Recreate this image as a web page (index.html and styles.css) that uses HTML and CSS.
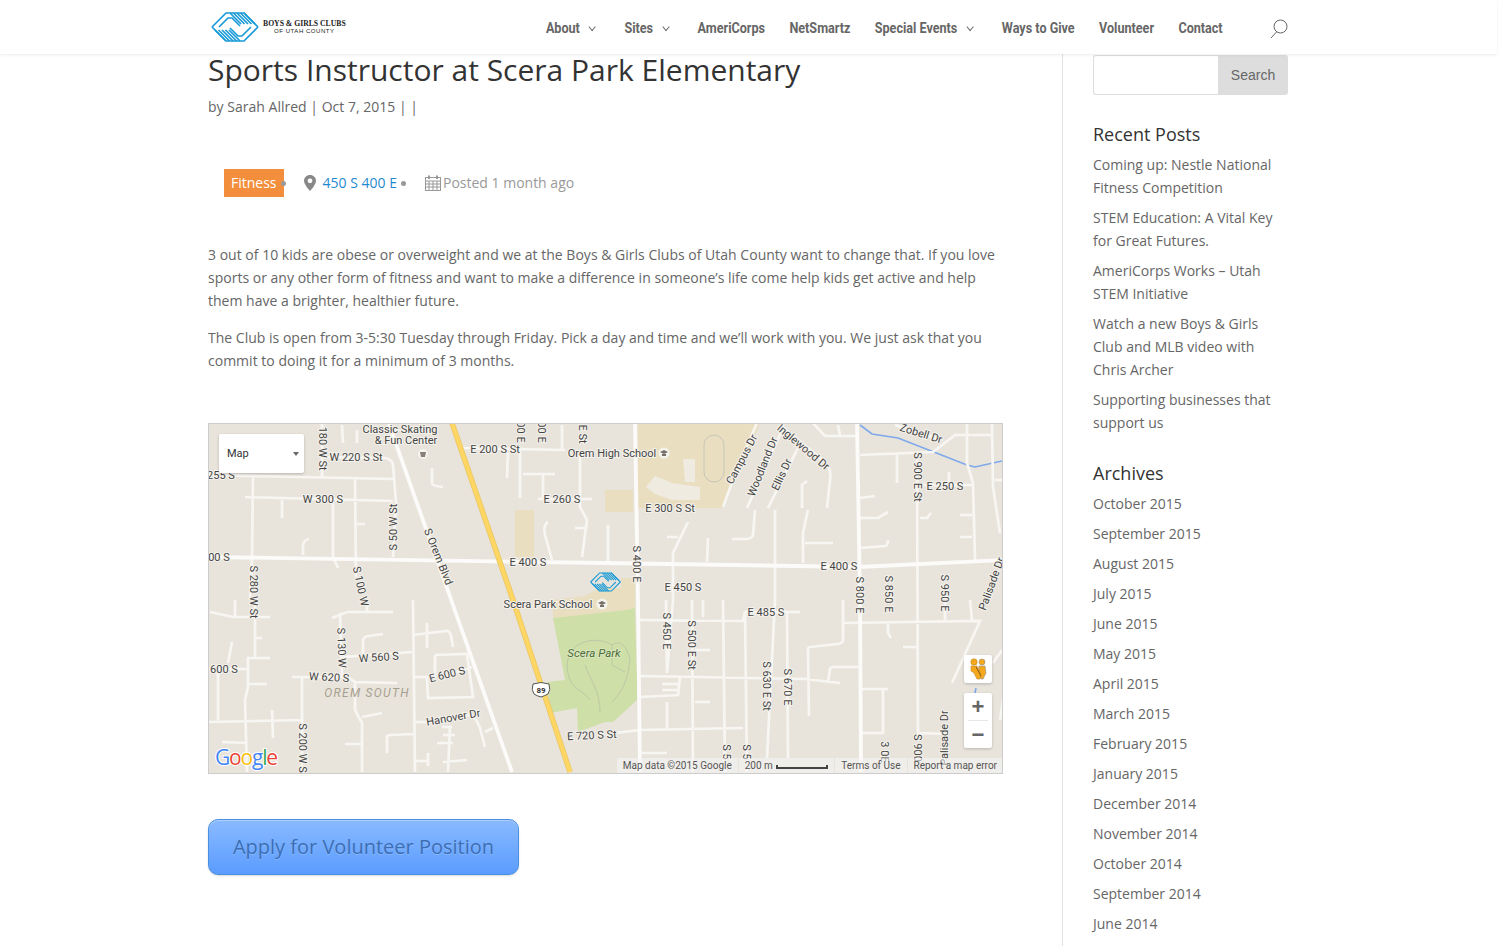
FILE: index.html
```html
<!DOCTYPE html>
<html lang="en">
<head>
    <meta charset="UTF-8">
    <meta name="viewport" content="width=device-width, initial-scale=1.0">
    <title>Sports Instructor at Scera Park Elementary</title>
    <link rel="stylesheet" href="styles.css">
</head>
<body>
    <svg class="defs" width="0" height="0">
        <symbol id="hands" viewBox="0 0 48 30">
            <g id="hand" fill="none" stroke="#1b9bd7" stroke-width="1.7">
                <path d="M1 15 L15 1 H33 L47 15"/>
                <path d="M19 1 L30 12 M22.5 1 L33.5 12 M26 1 L37 12 M29.5 1 L40.5 12 M33 1 L44 12"/>
                <path d="M8 15 L17 6 H21 L29 14"/>
            </g>
            <use href="#hand" transform="rotate(180 24 15)"/>
        </symbol>
    </svg>

    <header class="site-header">
        <div class="header-inner">
            <a class="logo" href="#">
                <svg class="logo-mark" width="48" height="30"><use href="#hands"/></svg>
                <span class="logo-text">
                    <span class="logo-top">Boys &amp; Girls Clubs</span>
                    <span class="logo-bottom">OF UTAH COUNTY</span>
                </span>
            </a>
            <nav class="main-nav">
                <a href="#" class="has-sub">About</a>
                <a href="#" class="has-sub">Sites</a>
                <a href="#">AmeriCorps</a>
                <a href="#">NetSmartz</a>
                <a href="#" class="has-sub">Special Events</a>
                <a href="#">Ways to Give</a>
                <a href="#">Volunteer</a>
                <a href="#">Contact</a>
            </nav>
            <svg class="search-icon" width="18" height="20" viewBox="0 0 18 20" fill="none" stroke="#666" stroke-width="1">
                <circle cx="10.5" cy="7.5" r="6.5"/>
                <path d="M6.5 13 L1 19"/>
            </svg>
        </div>
    </header>

    <div class="page">
        <main class="content">
            <h1>Sports Instructor at Scera Park Elementary</h1>
            <p class="byline">by <a href="#">Sarah Allred</a> | Oct 7, 2015 | <a href="#">|</a></p>

            <div class="job-meta">
                <span class="job-tag">Fitness</span>
                <span class="dot dot-tag"></span>
                <svg class="pin" width="12" height="16" viewBox="0 0 12 16">
                    <path d="M6 0 C2.6 0 0 2.6 0 5.8 C0 10 6 16 6 16 C6 16 12 10 12 5.8 C12 2.6 9.4 0 6 0 Z" fill="#888"/>
                    <circle cx="6" cy="5.8" r="2.4" fill="#fff"/>
                </svg>
                <a class="job-place" href="#">450 S 400 E</a>
                <span class="dot"></span>
                <svg class="cal" width="16" height="16" viewBox="0 0 16 16" fill="none" stroke="#999" stroke-width="1">
                    <rect x="0.5" y="2.5" width="15" height="13"/>
                    <path d="M0.5 6 H15.5 M0.5 9 H15.5 M0.5 12 H15.5 M4 6 V15 M8 6 V15 M12 6 V15"/>
                    <path d="M4 0.5 V4 M12 0.5 V4" stroke-width="2"/>
                </svg>
                <span class="job-date">Posted 1 month ago</span>
            </div>

            <p>3 out of 10 kids are obese or overweight and we at the Boys &amp; Girls Clubs of Utah County want to change that. If you love sports or any other form of fitness and want to make a difference in someone’s life come help kids get active and help them have a brighter, healthier future.</p>
            <p>The Club is open from 3-5:30 Tuesday through Friday. Pick a day and time and we’ll work with you. We just ask that you commit to doing it for a minimum of 3 months.</p>

            <div class="map">
                <svg class="map-canvas" width="794" height="349" viewBox="209 424 794 349">
                    <rect x="209" y="424" width="794" height="349" fill="#e8e4dc"/>
                    <!-- areas -->
                    <path class="school" d="M638 423 H760 L723 508 H638 Z M605 490 H633 V512 H605 Z M515 510 H534 V557 H515 Z M621 578 H635 V611 L553 618 L552 600 L585 596 L600 588 L621 588 Z"/>
                    <path class="park" d="M553 618 L627 610 L635 608 L637 677 V700 L613 722 H605 L578 732 L577 708 L550 713 L547 682 L565 680 Z"/>
                    <path class="park-path" d="M570 680 C562 660 572 645 585 642 C595 638 608 642 612 645 C622 638 628 650 630 660 C628 675 625 690 612 702 M585 665 C590 680 600 690 600 712 M570 680 C575 690 585 692 590 700 M612 645 V665 L625 672"/>
                    <path class="building" d="M646 487 L655 476 L672 483 L700 487 V500 H672 L655 494 Z M683 459 H695 V482 H685 Z"/>
                    <rect class="track" x="704" y="435" width="20" height="47" rx="10"/>
                    <path class="river" d="M860 425 L872 434 L898 438 L967 465 L975 467 L1002 461 M976 688 L974 698"/>
                    <!-- small roads -->
                    <path class="road" d="M208 475 L393 479 M245 497 L393 501 M253 477 L252 557 L250 600 M355 479 L356 577 M333 500 V557 L338 568 M282 500 V518 M322 423 V477 M322 457 L385 458 Q392 459 393 465 L396 503 L393 557 M342 425 L343 443 M357 430 V443 M303 555 V545 Q304 540 309 539 M357 524 H365 M432 468 V483 Q432 486 443 487 M462 448 L565 450 M520 450 V498 M508 453 L507 478 M523 474 H555 M543 475 V499 M538 499 H592 M580 453 V507 L587 520 L582 557 M575 528 H585 M548 522 Q543 525 545 535 L552 560 M562 425 V450 M757 423 Q740 460 723 507 M782 430 L747 508 M798 448 L768 508 M780 425 L825 462 Q832 470 830 480 L827 508 M775 510 V600 L767 758 M808 510 L803 533 V563 M805 543 H833 M807 481 L802 485 V508 M755 510 L753 535 Q752 539 745 539 H732 M708 538 L707 562 M688 522 L673 553 L673 600 L667 673 M667 537 H678 M608 525 V562 M813 423 L825 436 H857 M838 425 L840 436 M860 455 L933 452 L955 435 H992 M895 425 L943 440 M860 498 L875 496 M860 518 H878 L888 512 M860 548 L885 546 Q888 545 888 540 M897 455 V483 M917 453 L918 737 M920 518 H927 L931 513 M918 485 H972 M949 472 V485 M967 423 V463 L973 483 L975 560 M992 423 L993 487 L1000 533 M995 480 H1003 M960 515 H972 M960 537 H972 M210 612 L233 617 H270 M235 600 V617 M255 600 V658 H248 V687 L245 700 L247 772 M248 658 H270 M248 684 H267 M255 638 H262 M208 669 H247 M218 669 V720 M208 722 L302 720 M272 710 L273 738 M222 742 L247 743 M232 642 L228 663 M292 677 H348 L355 682 L397 683 M302 677 V772 M332 618 L347 612 L367 612 H393 M340 613 L342 677 M367 605 V612 M343 657 L412 652 M363 657 V642 Q363 636 369 636 L383 634 M413 600 L415 772 M413 635 L445 631 Q450 630 451 636 L453 647 M427 623 V648 M435 655 L467 654 L473 697 L428 698 L427 677 H413 M435 655 V678 M472 667 L450 674 M355 683 V710 L362 723 V772 M362 717 L382 713 M345 744 H362 M415 722 H438 L468 715 Q476 716 480 728 L485 747 M485 732 L493 728 M387 753 V737 Q387 735 390 735 L415 734 M442 727 H452 M450 727 L448 772 M443 735 H455 M437 743 H453 M443 762 L467 760 M415 761 H428 M428 753 V766 M640 620 L743 621 L745 612 H800 M640 676 L805 679 L840 683 M615 733 L640 730 L743 728 M666 600 L667 673 M667 702 V728 M692 600 L693 772 M695 650 H710 M695 702 H710 M703 600 V617 M723 600 L725 772 M745 612 L747 772 M787 613 L788 758 M680 677 L678 695 L640 697 M662 684 H678 M662 690 H678 M843 600 V640 Q843 643 838 644 L810 647 Q808 647 808 650 L809 716 M843 623 L980 621 L952 683 M828 683 L830 669 Q830 667 834 667 H858 M860 689 H888 M883 690 V733 H862 M888 623 V633 L891 638 M903 647 H918 M918 733 L948 734 M945 600 V622 M970 600 L972 620 M642 753 H667 M1002 650 L993 663 M1003 700 L1000 720"/>
                    <!-- main roads -->
                    <path class="road-main" d="M208 557 L605 563 L858 567 L1003 560 M389 424 L512 772 M635 423 L638 600 L640 772 M857 423 L860 600 L861 772"/>
                    <path class="road-hw-edge" d="M452 423 L513 600 L570 772"/>
                    <path class="road-hw" d="M452 423 L513 600 L570 772"/>

                    <g class="label">
                        <text x="400" y="433">Classic Skating</text>
                        <text x="406" y="444">&amp; Fun Center</text>
                        <text x="356" y="461">W 220 S St</text>
                        <text x="221" y="479">255 S</text>
                        <text x="323" y="503">W 300 S</text>
                        <text x="495" y="453">E 200 S St</text>
                        <text x="612" y="457">Orem High School</text>
                        <text x="562" y="503">E 260 S</text>
                        <text x="670" y="512">E 300 S St</text>
                        <text x="528" y="566">E 400 S</text>
                        <text x="219" y="561">00 S</text>
                        <text x="839" y="570">E 400 S</text>
                        <text x="683" y="591">E 450 S</text>
                        <text x="766" y="616">E 485 S</text>
                        <text x="945" y="490">E 250 S</text>
                        <text x="548" y="608">Scera Park School</text>
                        <text x="379" y="661" transform="rotate(-4 379 661)">W 560 S</text>
                        <text x="329" y="681" transform="rotate(3 329 681)">W 620 S</text>
                        <text x="224" y="673">600 S</text>
                        <text x="448" y="678" transform="rotate(-14 448 678)">E 600 S</text>
                        <text x="454" y="721" transform="rotate(-10 454 721)">Hanover Dr</text>
                        <text x="592" y="739" transform="rotate(-3 592 739)">E 720 S St</text>
                        <text x="319" y="444" transform="rotate(90 319 444)">S 180 W St</text>
                        <text x="517" y="432" transform="rotate(90 517 432)">00 E</text>
                        <text x="538" y="432" transform="rotate(90 538 432)">00 E</text>
                        <text x="579" y="434" transform="rotate(90 579 434)">E St</text>
                        <text x="397" y="527" transform="rotate(-90 397 527)">S 50 W St</text>
                        <text x="435" y="558" transform="rotate(68 435 558)">S Orem Blvd</text>
                        <text x="357" y="587" transform="rotate(78 357 587)">S 100 W</text>
                        <text x="250" y="592" transform="rotate(90 250 592)">S 280 W St</text>
                        <text x="338" y="648" transform="rotate(88 338 648)">S 130 W</text>
                        <text x="299" y="748" transform="rotate(90 299 748)">S 200 W S</text>
                        <text x="633" y="564" transform="rotate(90 633 564)">S 400 E</text>
                        <text x="856" y="595" transform="rotate(90 856 595)">S 800 E</text>
                        <text x="885" y="594" transform="rotate(90 885 594)">S 850 E</text>
                        <text x="914" y="477" transform="rotate(90 914 477)">S 900 E St</text>
                        <text x="941" y="593" transform="rotate(90 941 593)">S 950 E</text>
                        <text x="995" y="585" transform="rotate(-70 995 585)">Palisade Dr</text>
                        <text x="663" y="631" transform="rotate(90 663 631)">S 450 E</text>
                        <text x="688" y="645" transform="rotate(90 688 645)">S 500 E St</text>
                        <text x="763" y="686" transform="rotate(90 763 686)">S 630 E St</text>
                        <text x="784" y="687" transform="rotate(90 784 687)">S 670 E</text>
                        <text x="745" y="461" transform="rotate(-62 745 461)">Campus Dr</text>
                        <text x="766" y="468" transform="rotate(-68 766 468)">Woodland Dr</text>
                        <text x="785" y="476" transform="rotate(-65 785 476)">Ellis Dr</text>
                        <text x="801" y="450" transform="rotate(40 801 450)">Inglewood Dr</text>
                        <text x="920" y="437" transform="rotate(17 920 437)">Zobell Dr</text>
                        <text x="948" y="738" transform="rotate(-90 948 738)">Palisade Dr</text>
                        <text x="914" y="748" transform="rotate(90 914 748)">S 900</text>
                        <text x="881" y="752" transform="rotate(90 881 752)">3 0E</text>
                        <text x="723" y="752" transform="rotate(90 723 752)">S 5</text>
                        <text x="743" y="752" transform="rotate(90 743 752)">S 5</text>
                    </g>
                    <text class="label-park" x="594" y="657">Scera Park</text>
                    <text class="label-area" x="367" y="697">OREM SOUTH</text>

                    <!-- poi dots -->
                    <circle cx="423" cy="454" r="5" fill="#f5f3ee"/>
                    <path d="M420 452 H426 L425 457 H421 Z" fill="#8a7f78"/>
                    <circle cx="664" cy="453" r="5.5" fill="#f5f3ee"/>
                    <path d="M660 452 L664 450 L668 452 L664 454 Z M662 454 H666 V456 H662 Z" fill="#77706a"/>
                    <circle cx="602" cy="604" r="5.5" fill="#f5f3ee"/>
                    <path d="M598 603 L602 601 L606 603 L602 605 Z M600 605 H604 V607 H600 Z" fill="#77706a"/>

                    <!-- us 89 shield -->
                    <path d="M533 684 Q541 681 549 684 Q551 690 548 694 Q544 696 541 697 Q537 696 534 694 Q531 690 533 684 Z" fill="#fff" stroke="#555" stroke-width="1"/>
                    <text class="label-shield" x="541" y="693">89</text>

                    <!-- marker -->
                    <use href="#hands" x="590" y="572" width="31" height="20"/>

                    <!-- google logo -->
                    <text class="google" x="215" y="765"><tspan fill="#4285f4">G</tspan><tspan fill="#ea4335">o</tspan><tspan fill="#fbbc05">o</tspan><tspan fill="#4285f4">g</tspan><tspan fill="#34a853">l</tspan><tspan fill="#ea4335">e</tspan></text>
                </svg>

                <div class="map-type">
                    <span>Map</span>
                    <i class="caret"></i>
                </div>

                <div class="pegman">
                    <svg width="20" height="22" viewBox="0 0 20 22">
                        <circle cx="6" cy="4" r="3.2" fill="#f5a81c" stroke="#b98a2c" stroke-width=".6"/>
                        <circle cx="14" cy="4" r="3" fill="#f5a81c" stroke="#8f8f8f" stroke-width=".6"/>
                        <path d="M11 8 H17 L18 15 L15 21 H13 L11 16 Z" fill="#f5a81c" stroke="#8f8f8f" stroke-width=".6"/>
                        <path d="M3 8 H9 L13 16 L12 21 H9 L6 15 L3 13 Z" fill="#f5a81c" stroke="#b98a2c" stroke-width=".6"/>
                        <path d="M8 9 L13 18" stroke="#8a5a10" stroke-width="1"/>
                    </svg>
                </div>

                <div class="zoom-ctrl">
                    <span class="zoom-btn">+</span>
                    <span class="zoom-btn">−</span>
                </div>

                <div class="map-attrib">
                    <span class="attrib-cell">Map data ©2015 Google</span>
                    <span class="attrib-cell">200 m <i class="scale"></i></span>
                    <span class="attrib-cell">Terms of Use</span>
                    <span class="attrib-cell">Report a map error</span>
                </div>
            </div>

            <a class="apply-btn" href="#">Apply for Volunteer Position</a>
        </main>

        <aside class="sidebar">
            <form class="search-form">
                <input type="text" class="search-input">
                <button type="button" class="search-btn">Search</button>
            </form>

            <h4>Recent Posts</h4>
            <ul class="side-list">
                <li><a href="#">Coming up: Nestle National Fitness Competition</a></li>
                <li><a href="#">STEM Education: A Vital Key for Great Futures.</a></li>
                <li><a href="#">AmeriCorps Works – Utah STEM Initiative</a></li>
                <li><a href="#">Watch a new Boys &amp; Girls Club and MLB video with Chris Archer</a></li>
                <li><a href="#">Supporting businesses that support us</a></li>
            </ul>

            <h4>Archives</h4>
            <ul class="side-list">
                <li><a href="#">October 2015</a></li>
                <li><a href="#">September 2015</a></li>
                <li><a href="#">August 2015</a></li>
                <li><a href="#">July 2015</a></li>
                <li><a href="#">June 2015</a></li>
                <li><a href="#">May 2015</a></li>
                <li><a href="#">April 2015</a></li>
                <li><a href="#">March 2015</a></li>
                <li><a href="#">February 2015</a></li>
                <li><a href="#">January 2015</a></li>
                <li><a href="#">December 2014</a></li>
                <li><a href="#">November 2014</a></li>
                <li><a href="#">October 2014</a></li>
                <li><a href="#">September 2014</a></li>
                <li><a href="#">June 2014</a></li>
            </ul>
        </aside>
    </div>
</body>
</html>
```

FILE: styles.css
```css
html, body {
    margin: 0;
    padding: 0;
    height: 946px;
    overflow: hidden;
}

body {
    font-family: "Open Sans", Arial, sans-serif;
    font-size: 14px;
    line-height: 23px;
    color: #666;
    background-color: #fff;
}

a {
    color: inherit;
    text-decoration: none;
}

.defs {
    position: absolute;
}

/* header */
.site-header {
    position: relative;
    z-index: 2;
    height: 54px;
    width: 1497px;
    background-color: #fff;
    box-shadow: 0 1px 3px rgba(0, 0, 0, 0.08);
}

.header-inner {
    width: 1080px;
    height: 54px;
    margin-left: 208px;
    display: flex;
    align-items: center;
}

.logo {
    display: flex;
    align-items: center;
    margin-left: 3px;
}

.logo-mark {
    display: block;
}

.logo-text {
    display: flex;
    flex-direction: column;
    align-items: center;
    margin-left: 4px;
    color: #222;
}

.logo-top {
    font-family: "Liberation Serif", serif;
    font-weight: bold;
    font-size: 7.7px;
    line-height: 9px;
    font-variant: small-caps;
    text-transform: uppercase;
}

.logo-bottom {
    font-family: "Liberation Sans", sans-serif;
    font-size: 6px;
    line-height: 7px;
    letter-spacing: 0.55px;
}

/* the nav font is a condensed one, squeeze Roboto to the same width */
.main-nav {
    display: flex;
    align-items: center;
    gap: 29px;
    margin-left: auto;
    margin-right: 47px;
    margin-top: 2px;
    font-family: Roboto, sans-serif;
    font-weight: bold;
    font-size: 15px;
    color: #666;
    transform: scaleX(0.84);
    transform-origin: right center;
    white-space: nowrap;
}

.has-sub::after {
    content: "";
    display: inline-block;
    width: 5px;
    height: 5px;
    margin-left: 12px;
    margin-right: 6px;
    border-right: 1.5px solid #666;
    border-bottom: 1.5px solid #666;
    transform: translateY(-3px) rotate(45deg);
}

.search-icon {
    flex-shrink: 0;
    margin-top: 3px;
}

/* page layout */
.page {
    width: 1080px;
    margin-left: 208px;
    display: flex;
    align-items: flex-start;
}

.content {
    width: 795px;
    flex-shrink: 0;
}

.content h1 {
    margin: 0;
    font-size: 30px;
    font-weight: 400;
    line-height: 32px;
    color: #333;
}

.byline {
    margin: 9px 0 0;
}

.byline a {
    color: #666;
}

.content p {
    margin-bottom: 14px;
    letter-spacing: 0.012px;
}

.job-meta {
    display: flex;
    align-items: center;
    height: 28px;
    margin: 51px 0 46px 16px;
}

.job-tag {
    background-color: #f28e3c;
    color: #fff;
    height: 28px;
    line-height: 28px;
    padding: 0 7px;
}

.dot {
    width: 5px;
    height: 5px;
    border-radius: 50%;
    background-color: #999;
    margin-left: 4px;
}

.dot-tag {
    margin-left: -3px;
    position: relative;
}

.pin {
    margin-left: 18px;
}

.job-place {
    color: #1f8ad0;
    margin-left: 7px;
    margin-top: -2px;
}

.cal {
    margin-left: 19px;
}

.job-date {
    color: #999;
    margin-left: 2px;
    margin-top: -2px;
}

.content p:not(.byline) {
    margin-top: 0;
}

/* map */
.map {
    position: relative;
    width: 793px;
    height: 349px;
    margin-top: 51px;
    border: 1px solid #ccc;
    overflow: hidden;
}

.map-canvas {
    display: block;
}

.school { fill: #e9dfc0; }
.park { fill: #cfdfa8; }
.park-path { fill: none; stroke: #bcc9a6; stroke-width: 1; }
.building { fill: #efebe0; }
.track { fill: none; stroke: #c8c4b8; stroke-width: 1; }
.river { fill: none; stroke: #7fa9ea; stroke-width: 1.6; }
.road { fill: none; stroke: #f8f6f2; stroke-width: 2.7; }
.road-main { fill: none; stroke: #fcfbf9; stroke-width: 3.8; }
.road-hw { fill: none; stroke: #fdd663; stroke-width: 4; }
.road-hw-edge { fill: none; stroke: #e8c664; stroke-width: 5.5; }

.label text {
    font-family: Roboto, sans-serif;
    font-size: 11px;
    text-anchor: middle;
    fill: #444;
    stroke: #f4f2ec;
    stroke-width: 2px;
    paint-order: stroke;
}

.label-park {
    font-family: Roboto, sans-serif;
    font-size: 11.5px;
    font-style: italic;
    text-anchor: middle;
    fill: #4d6b3c;
    stroke: #d9e6bc;
    stroke-width: 2px;
    paint-order: stroke;
}

.label-area {
    font-family: Roboto, sans-serif;
    font-size: 12px;
    font-style: italic;
    letter-spacing: 1.3px;
    text-anchor: middle;
    fill: #a8a08e;
}

.label-shield {
    font-family: Roboto, sans-serif;
    font-size: 8px;
    font-weight: bold;
    text-anchor: middle;
    fill: #333;
}

.google {
    font-family: "Open Sans", sans-serif;
    font-size: 21px;
    font-weight: 500;
    letter-spacing: -1.2px;
    stroke: #fff;
    stroke-width: 2px;
    paint-order: stroke;
}

.map-type {
    position: absolute;
    left: 10px;
    top: 10px;
    width: 85px;
    height: 39px;
    background-color: #fff;
    border-radius: 2px;
    box-shadow: 0 1px 3px rgba(0, 0, 0, 0.2);
    font-family: Roboto, sans-serif;
    font-size: 11px;
    line-height: 39px;
    color: #333;
    text-indent: 8px;
}

.caret {
    position: absolute;
    right: 5px;
    top: 18px;
    border-left: 3.5px solid transparent;
    border-right: 3.5px solid transparent;
    border-top: 4px solid #666;
}

.pegman {
    position: absolute;
    left: 755px;
    top: 231px;
    width: 28px;
    height: 28px;
    background-color: #fff;
    border-radius: 2px;
    box-shadow: 0 1px 3px rgba(0, 0, 0, 0.2);
    display: flex;
    align-items: center;
    justify-content: center;
}

.zoom-ctrl {
    position: absolute;
    left: 755px;
    top: 269px;
    width: 28px;
    height: 55px;
    background-color: #fff;
    border-radius: 2px;
    box-shadow: 0 1px 3px rgba(0, 0, 0, 0.2);
    display: flex;
    flex-direction: column;
}

.zoom-btn {
    flex: 1;
    text-align: center;
    font-family: "Liberation Sans", sans-serif;
    font-size: 22px;
    font-weight: bold;
    line-height: 27px;
    color: #666;
}

.zoom-btn + .zoom-btn {
    border-top: 1px solid #e6e6e6;
    margin: 0 4px;
}

.map-attrib {
    position: absolute;
    right: 0;
    bottom: 0;
    width: 384px;
    height: 15px;
    display: flex;
    justify-content: flex-end;
    font-family: Roboto, sans-serif;
    font-size: 10px;
    line-height: 15px;
    color: #555;
}

.attrib-cell {
    background-color: rgba(245, 245, 245, 0.55);
    padding: 0 6px;
    margin-left: 1px;
    white-space: nowrap;
}

.attrib-cell:last-child {
    padding-right: 5px;
}

.scale {
    display: inline-block;
    width: 52px;
    height: 4px;
    margin-left: 1px;
    border: 2px solid #444;
    border-top: none;
    box-sizing: border-box;
}

/* button */
.apply-btn {
    display: block;
    width: 311px;
    height: 56px;
    margin-top: 45px;
    box-sizing: border-box;
    border: 1px solid #4a90e2;
    border-radius: 10px;
    background: linear-gradient(#8abaff, #5a9cff);
    box-shadow: 0 1px 2px rgba(0, 0, 0, 0.15), inset 0 1px 0 rgba(255, 255, 255, 0.3);
    color: #3c6eb4;
    font-size: 20px;
    line-height: 54px;
    text-align: center;
    text-shadow: 0 1px 0 rgba(255, 255, 255, 0.2);
}

/* sidebar */
.sidebar {
    width: 195px;
    height: 892px;
    margin-left: 59px;
    padding-left: 30px;
    border-left: 1px solid #e2e2e2;
}

.search-form {
    display: flex;
    height: 40px;
    margin: 1px 0 26px;
}

.search-input {
    width: 125px;
    height: 40px;
    box-sizing: border-box;
    padding: 0;
    border: 1px solid #ddd;
    border-right: none;
    border-radius: 3px 0 0 3px;
}

.search-btn {
    width: 70px;
    height: 40px;
    padding: 0;
    border: none;
    border-radius: 0 3px 3px 0;
    background-color: #ddd;
    color: #666;
    font-family: "Liberation Sans", Arial, sans-serif;
    font-size: 14px;
}

.sidebar h4 {
    margin: 0 0 5px;
    font-size: 18px;
    font-weight: 400;
    line-height: 27px;
    color: #333;
}

.side-list {
    list-style: none;
    margin: 0 0 26px;
    padding: 0;
}

.side-list li {
    margin-bottom: 7px;
}
```
